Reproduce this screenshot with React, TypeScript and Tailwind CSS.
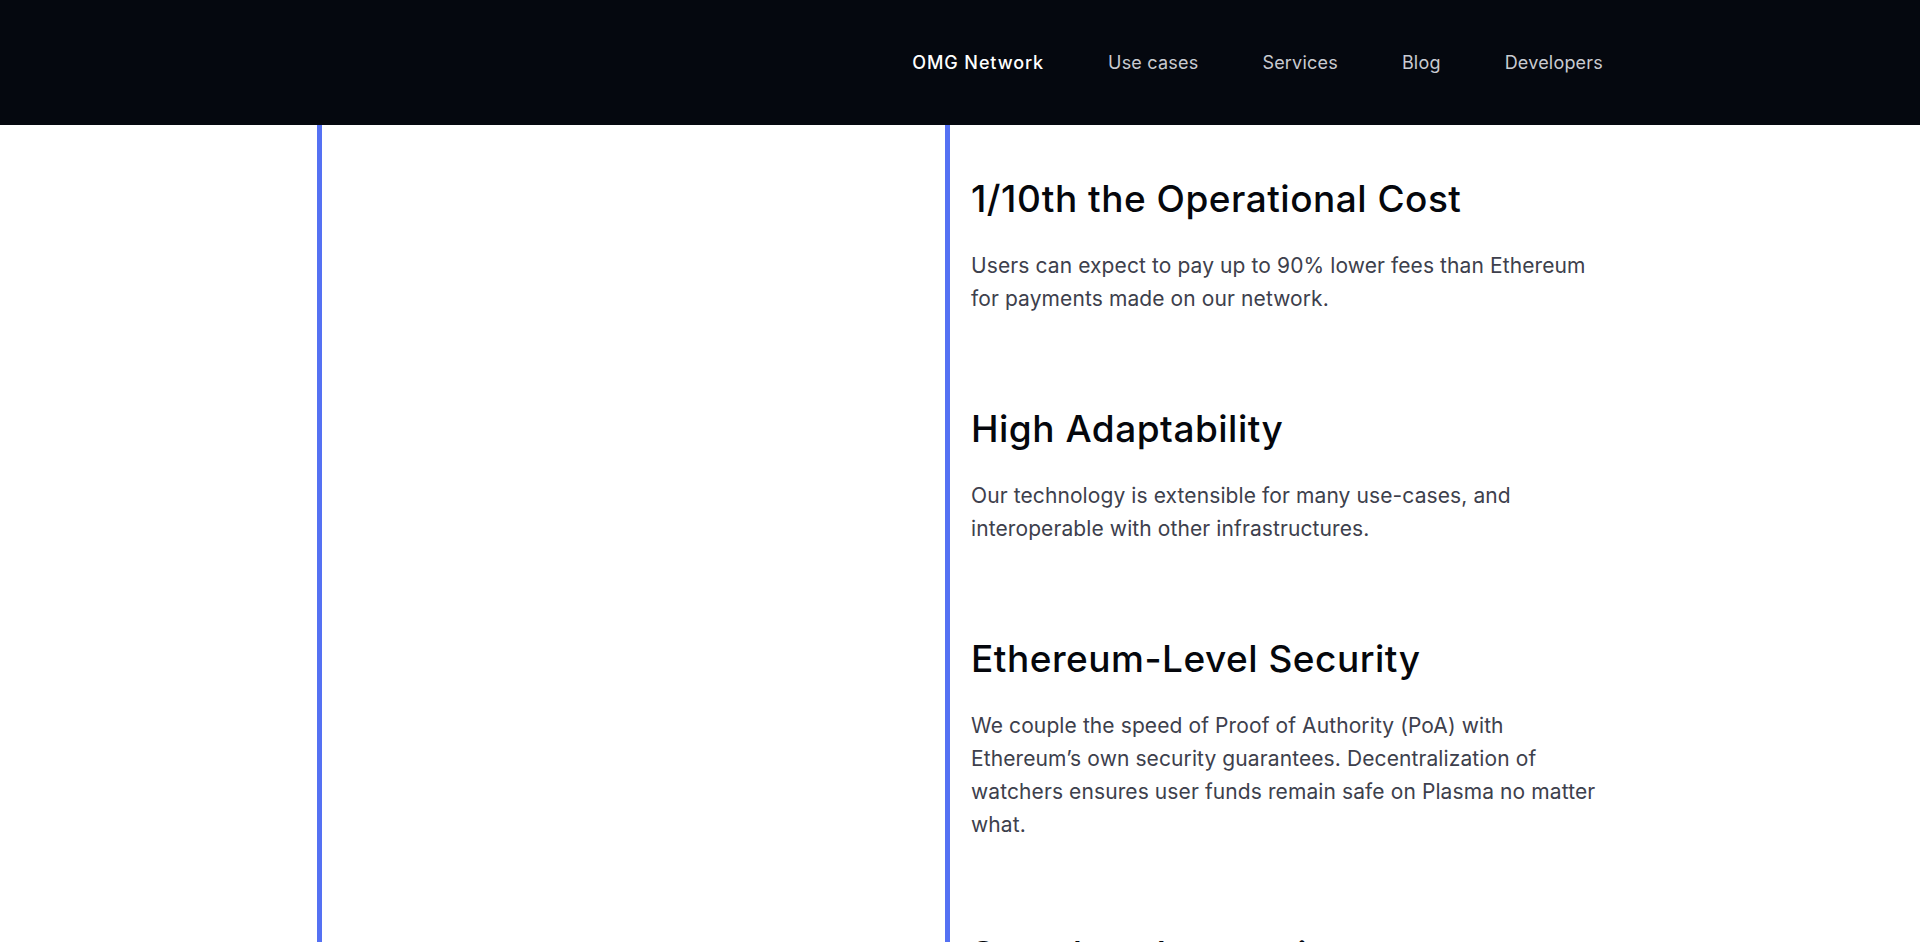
import React from 'react';

const navLinks = ['OMG Network', 'Use cases', 'Services', 'Blog', 'Developers'];

const features = [
  {
    title: '1/10th the Operational Cost',
    body: 'Users can expect to pay up to 90% lower fees than Ethereum for payments made on our network.',
  },
  {
    title: 'High Adaptability',
    body: 'Our technology is extensible for many use-cases, and interoperable with other infrastructures.',
  },
  {
    title: 'Ethereum-Level Security',
    body: 'We couple the speed of Proof of Authority (PoA) with Ethereum\u2019s own security guarantees. Decentralization of watchers ensures user funds remain safe on Plasma no matter what.',
  },
  {
    title: 'Seamless Integration',
    body: 'Connect your existing wallets, exchanges and applications to the network with minimal changes.',
  },
];

const App: React.FC = () => {
  return (
    <div className="min-h-screen bg-white font-['Inter',sans-serif] overflow-hidden">
      <header className="bg-[#05080f] h-[125px]">
        <div className="w-[1286px] mx-auto h-full flex items-center justify-end">
          <nav className="flex items-center gap-[64px] text-[18px] tracking-[0.2px]">
            {navLinks.map((link, i) => (
              <a
                key={link}
                href="#"
                className={i === 0 ? 'text-white font-medium tracking-[0.9px]' : 'text-[#c9cbd1]'}
              >
                {link}
              </a>
            ))}
          </nav>
        </div>
      </header>

      <main className="w-[1286px] mx-auto flex border-l-[5px] border-[#5571f3]">
        <div className="w-[623px] shrink-0" />
        <section className="flex-1 border-l-[5px] border-[#5571f3] pl-[21px] pt-[52px] flex flex-col gap-[92px]">
          {features.map(f => (
            <div key={f.title} className="max-w-[632px]">
              <h3 className="text-[37px] leading-[44px] font-medium text-[#05070c] tracking-[0.5px]">
                {f.title}
              </h3>
              <p className="mt-[28px] text-[21px] leading-[33px] text-[#3d404c] tracking-[0.1px]">
                {f.body}
              </p>
            </div>
          ))}
        </section>
      </main>
    </div>
  );
};

export default App;
